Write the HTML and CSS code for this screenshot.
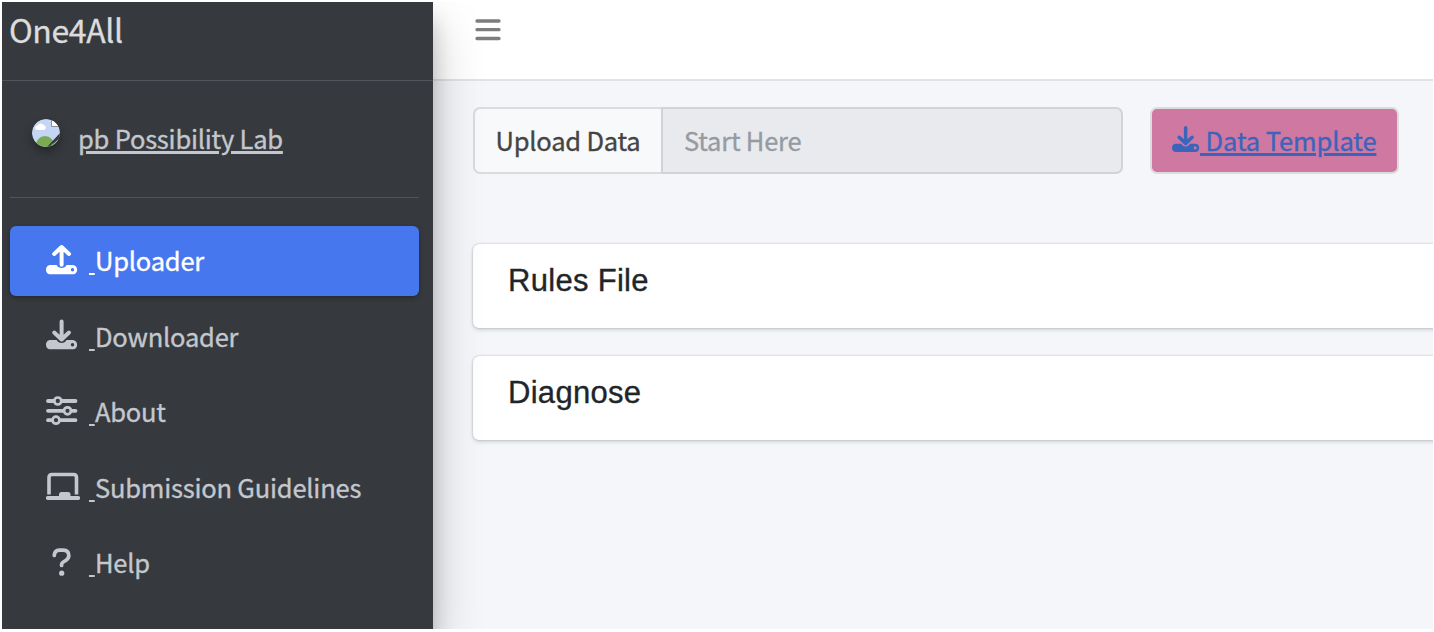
FILE: index.html
```html
<!DOCTYPE html>
<html lang="en">
<head>
<meta charset="utf-8">
<title>One4All</title>
<link rel="stylesheet" href="styles.css">
</head>
<body>
<svg class="defs" width="0" height="0">
  <symbol id="tray" viewBox="0 0 32 31">
    <path fill="currentColor" fill-rule="evenodd" d="M4.5 21h6.2c1.2 2.300 2.800 3 4.900 3s3.700-.7 4.900-3h6.200c5.900 0 5.900 9.300 0 9.300H4.500c-6 0-6-9.300 0-9.300zM26.500 24a1.700 1.700 0 1 0 0 3.400a1.700 1.700 0 1 0 0-3.400z"/>
  </symbol>
  <symbol id="download" viewBox="0 0 32 31">
    <use href="#tray"/>
    <path fill="none" stroke="currentColor" stroke-width="4" stroke-linecap="round" stroke-linejoin="round" d="M15.600 2.500v17.500M8.200 13.500l7.400 7l7.400-7"/>
  </symbol>
  <symbol id="upload" viewBox="0 0 32 31">
    <use href="#tray"/>
    <path fill="none" stroke="currentColor" stroke-width="4" stroke-linecap="round" stroke-linejoin="round" d="M15.600 3v17.800M8.200 10l7.400-7l7.400 7"/>
  </symbol>
</svg>
<div class="app">
  <aside class="sidebar">
    <div class="brand">One4All</div>
    <div class="user">
      <svg class="avatar" viewBox="0 0 28 28">
        <clipPath id="disc"><circle cx="14" cy="14" r="14"/></clipPath>
        <g clip-path="url(#disc)">
          <path fill="#c5d5f4" d="M0 0h28v28H0z"/>
          <path fill="#fff" d="M5.500 11a2.300 2.300 0 0 1-.2-4.600A4 4 0 0 1 12 6.300a2.500 2.500 0 0 1 .2 4.700z"/>
          <ellipse cx="13" cy="27" rx="9.500" ry="10" fill="#7baa54"/>
          <path fill="#33383d" d="M28 14L15 28h13z"/>
          <path stroke="#a9bccb" stroke-width="1.300" d="M20 27l7-6.500"/>
          <path stroke="#7baa54" stroke-width="1.300" d="M18.500 27.500l3-3"/>
          <path fill="#fff" stroke="#777" stroke-width=".8" d="M19.500 0v7.500H28V6z"/>
        </g>
      </svg>
      <a class="user-name">pb Possibility Lab</a>
    </div>
    <nav class="menu">
      <a class="item active"><svg class="icon" viewBox="0 0 32 31"><use href="#upload"/></svg><u class="gap">&nbsp;</u><span class="label">Uploader</span></a>
      <a class="item"><svg class="icon" viewBox="0 0 32 31"><use href="#download"/></svg><u class="gap">&nbsp;</u><span class="label">Downloader</span></a>
      <a class="item"><svg class="icon" viewBox="0 0 32 31"><g fill="none" stroke="currentColor" stroke-linecap="round"><path stroke-width="3.800" d="M2 6h5.500M16 6h13.500M2 15.800h15.500M25.500 15.800h4M2 25.200h4M14 25.200h15.500"/><g stroke-width="2.700"><circle cx="11.800" cy="6" r="3.500"/><circle cx="21.500" cy="15.800" r="3.500"/><circle cx="10" cy="25.200" r="3.500"/></g></g></svg><u class="gap">&nbsp;</u><span class="label">About</span></a>
      <a class="item"><svg class="icon wide" viewBox="0 0 34 31"><path fill="none" stroke="currentColor" stroke-width="3.600" d="M3 24.500V7.500q0-3 3-3H27.500q3 0 3 3V24.500"/><path fill="currentColor" d="M13 26v-1.500q0-2.500 2.500-2.500h6.500q2.500 0 2.500 2.500V26h7.500q2.200 0 2.200 2t-2.200 2H2q-2.200 0-2.200-2t2.200-2z"/></svg><u class="gap">&nbsp;</u><span class="label">Submission Guidelines</span></a>
      <a class="item"><svg class="icon" viewBox="0 0 32 31"><path fill="none" stroke="currentColor" stroke-width="3.700" stroke-linecap="round" stroke-linejoin="round" d="M8.300 9.500V9q.5-4.500 5-4.800h4q5.500.3 5.500 5.300q0 3-2.800 4.800q-4.400 2.300-4.400 4.200V19.500"/><circle cx="15.700" cy="27.200" r="2.600" fill="currentColor"/></svg><u class="gap">&nbsp;</u><span class="label">Help</span></a>
    </nav>
  </aside>
  <main class="main">
    <header class="topbar">
      <svg class="burger" viewBox="0 0 26 22"><path stroke="currentColor" stroke-width="3.300" stroke-linecap="round" d="M2 2h22M2 10.700h22M2 19.500h22"/></svg>
    </header>
    <div class="content">
      <div class="tools">
        <div class="field">
          <div class="field-button">Upload Data</div>
          <div class="field-input">Start Here</div>
        </div>
        <a class="template"><svg class="template-icon" viewBox="0 0 32 31"><use href="#download"/></svg><span class="template-text">&nbsp;Data Template</span></a>
      </div>
      <section class="card"><h3>Rules File</h3></section>
      <section class="card"><h3>Diagnose</h3></section>
    </div>
  </main>
</div>
</body>
</html>
```
FILE: styles.css
```css
* { box-sizing: border-box; }
html, body { height: 100%; }
body {
  margin: 0;
  padding: 2px 1px 3px 2px;
  background: #fff;
  font: 25.5px/36px "Noto Sans CJK SC", "Open Sans", sans-serif;
  letter-spacing: -.21px;
  -webkit-text-stroke: .35px currentColor;
  overflow: hidden;
}
.defs { position: absolute; }
.app { display: flex; height: 627px; overflow: hidden; background: #f4f6fa; }
.sidebar {
  z-index: 1;
  flex: none;
  width: 431px;
  background: #363a3e;
  color: #c4c7cd;
  box-shadow: 0 24px 48px rgba(0,0,0,.22), 0 18px 18px rgba(0,0,0,.18);
}
.brand {
  height: 79px;
  padding: 5px 0 0 7px;
  border-bottom: 1px solid #50555b;
  font-size: 32px;
  line-height: 44px;
  color: #dcdcdd;
  letter-spacing: -.4px;
}
.user {
  display: flex;
  height: 117px;
  margin: 0 14px 0 8px;
  padding: 38px 0 0 22px;
  border-bottom: 1px solid #50555b;
}
.avatar { width: 28px; height: 28px; border-radius: 50%; box-shadow: 0 5px 10px rgba(0,0,0,.35); }
.user-name {
  margin: 1px 0 0 18px;
  text-decoration: underline;
  text-decoration-thickness: 2.500px;
  text-underline-offset: 2px;
  white-space: nowrap;
}
.menu { display: flex; flex-direction: column; gap: 5.500px; padding: 28px 14px 0 8px; }
.item { display: flex; align-items: center; height: 70px; padding: 0 0 2px 35.500px; border-radius: 6px; white-space: nowrap; }
.active { background: #4777ee; color: #fff; box-shadow: 0 2px 5px rgba(0,0,0,.3); }
.icon { flex: none; width: 32px; height: 31px; margin: 0 11.500px 2px 0; }
.wide { width: 34px; margin-right: 9.500px; }
.gap { width: 6px; letter-spacing: 0; text-decoration-thickness: 2px; text-underline-offset: 2px; overflow: hidden; }
.main { flex: 1; min-width: 0; }
.topbar { height: 79px; padding: 17px 0 0 41.500px; background: #fff; border-bottom: 2px solid #e0e2e5; }
.burger { display: block; width: 26px; height: 22px; color: #7d7d7d; }
.content { padding: 26px 0 0 40px; }
.tools { display: flex; gap: 27px; height: 67px; margin-bottom: 70px; }
.field { display: flex; width: 650px; height: 67px; }
.field-button, .field-input { border: 2px solid #d9dbdc; padding: 13px 0 0 21px; white-space: nowrap; }
.field-button { width: 188px; padding-left: 20.500px; border-right: 0; border-radius: 7px 0 0 7px; background: #f8f9fa; color: #444; }
.field-input { flex: 1; border-color: #d0d3d7; border-radius: 0 7px 7px 0; background: #e9eaee; color: #959ba1; }
.template {
  display: flex;
  width: 249px;
  height: 67px;
  padding: 13px 0 0 20px;
  border: 2px solid #dcdcdd;
  border-radius: 7px;
  background: #cf78a2;
  color: #3b64bb;
  white-space: nowrap;
}
.template-icon { flex: none; width: 28px; height: 28px; margin-top: 3px; }
.template-text { letter-spacing: -.1px; text-decoration: underline; text-decoration-thickness: 3px; text-underline-offset: 2px; }
.card {
  height: 84px;
  margin: 0 -10px 28px 0;
  padding: 19px 0 0 35px;
  border-radius: 6px;
  background: #fff;
  box-shadow: 0 0 2px rgba(0,0,0,.25), 0 2px 4px rgba(0,0,0,.14);
}
h3 { margin: 0; font: 400 31px/36px "Liberation Sans", Arial, sans-serif; color: #212529; letter-spacing: .3px; }
```
